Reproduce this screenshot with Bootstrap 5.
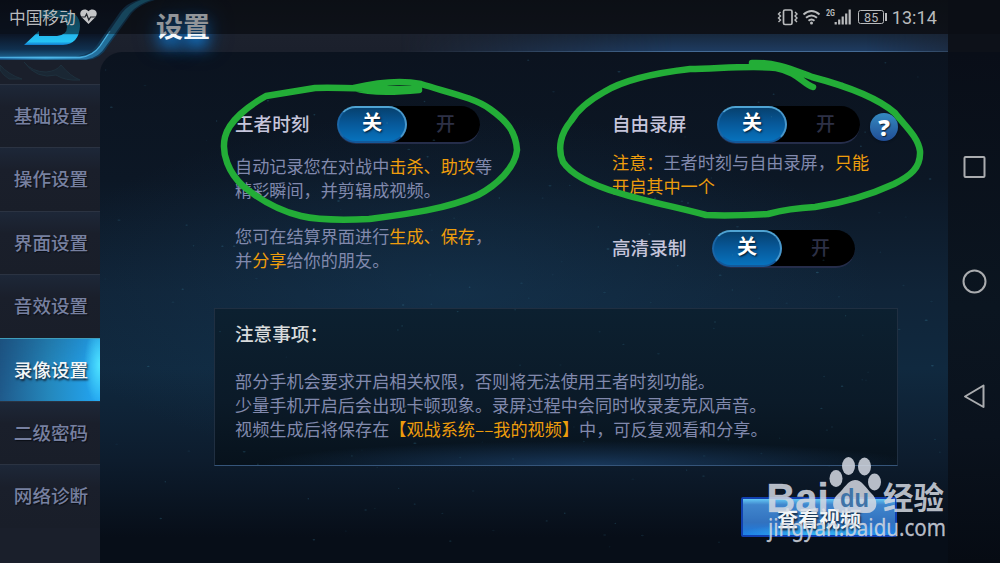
<!DOCTYPE html>
<html lang="zh-CN">
<head>
    <meta charset="UTF-8">
    <meta name="viewport" content="width=device-width, initial-scale=1.0">
    <title>设置</title>
    <link href="https://cdn.jsdelivr.net/npm/bootstrap@5.3.0/dist/css/bootstrap.min.css" rel="stylesheet">
    <style>
        body {
            font-family: "Noto Sans CJK SC", sans-serif;
            background: #080d16;
            color: #8189ad;
        }

        .screen {
            width: 1000px;
            height: 563px;
        }

        /* phone status bar, drawn over the game header */
        .status-bar {
            height: 34px;
            padding: 0 63px 0 9px;
            background: rgba(9, 11, 17, .42);
            color: #b9bbbd;
            font-size: 17px;
            z-index: 3;
        }

        .status-bar .carrier { font-size: 16.7px; line-height: 35px; }
        .status-bar .clock { font-family: Roboto, sans-serif; font-size: 18px; letter-spacing: .1px; line-height: 35px; }

        /* header */
        .game-header {
            height: 52px;
            background: linear-gradient(#0e1219, #12161f 34px, #1c212d 34px, #1b202c);
        }

        .game-header::after {
            content: "";
            position: absolute;
            left: 400px;
            right: 52px;
            top: 34px;
            height: 18px;
            background: linear-gradient(#17283d, #1e3b60);
            border-bottom: 1px solid #446a94;
            -webkit-mask-image: linear-gradient(90deg, transparent, #000 50%, #000 85%, rgba(0, 0, 0, .5));
        }

        .header-end {
            width: 52px;
            height: 52px;
            right: 0;
            top: 0;
            background: #0d1119;
        }

        .title-text {
            padding-left: 156px;
            font-size: 27px;
            font-weight: 700;
            line-height: 52px;
            color: #f4f8fb;
            text-shadow: 0 8px 14px #1480d8, 0 4px 24px #0b4f98;
        }

        .header-art {
            left: 0;
            top: 0;
            z-index: 1;
        }

        /* side menu */
        .side-menu {
            width: 100px;
            padding-top: 32px;
            background: #1a1f2b;
        }

        .side-menu .nav-link {
            height: 63.4px;
            padding: 0;
            text-align: center;
            padding-left: 2px;
            font-size: 18.6px;
            font-weight: 500;
            line-height: 59px;
            color: #7780a0;
            text-shadow: 1px 1px 1px #0a0e16;
            border-radius: 0;
            border-top: 1px solid #2b3342;
            background: linear-gradient(#1d2738, #1a1f2b 35%, #191e29);
        }

        .side-menu .nav-link.active {
            color: #f3f6f8;
            text-shadow: 1px 2px 2px #123;
            border-top-color: #3f9dbb;
            background:
                radial-gradient(ellipse 16px 40px at 100% 42%, #4fe4ff, rgba(40, 190, 255, 0)),
                linear-gradient(160deg, rgba(20, 60, 100, .3), transparent 60%),
                linear-gradient(90deg, #1f5a8b, #2488bd 50%, #22a6f4);
        }

        /* main area */
        .sky-wrap { background: #1a1f2b; }

        .sky {
            width: 848px;
            border-top-left-radius: 22px;
            padding: 54px 50px 0 114px;
            background:
                radial-gradient(ellipse 420px 180px at 42% 47%, rgba(24, 64, 96, .4), transparent),
                linear-gradient(#0b131f 0%, #0c1725 25%, #102438 47%, #10293f 62%, #0d1c2d 80%, #070e18 95%);
        }

        .option-row { padding-left: 21px; }
        .option-left { width: 378px; }
        .option-label {
            font-size: 18.6px;
            font-weight: 500;
            line-height: 34px;
            color: #c6c5dc;
        }

        .option-desc {
            font-size: 17.15px;
            line-height: 23.6px;
            white-space: nowrap;
        }

        .hl { color: #ee9d0c; }

        .switch-pill {
            width: 143px;
            height: 38px;
            border-radius: 19px;
            background: #000;
            border-bottom: 2px solid #252d4a;
            font-size: 20px;
            line-height: 28px;
        }

        .switch-pill .switch-on {
            width: 70px;
            height: 37px;
            border-radius: 19px;
            color: #fff;
            font-weight: 700;
            text-shadow: 1px 1px 2px #012;
            border: 2px solid #1b65a5;
            border-top-color: #4fa3d3;
            border-right-color: #4796cb;
            border-bottom-color: #13599a;
            background: linear-gradient(#06416f, #075797 45%, #0772bd);
        }

        .switch-pill .switch-off {
            color: #2d3046;
            font-weight: 500;
            font-size: 19px;
            line-height: 33px;
            padding-left: 4px;
        }

        .help-dot {
            width: 28px;
            height: 28px;
            margin: 7px 0 0 10px;
            font: 900 23px/28px "Noto Sans", sans-serif;
            color: #fff;
            background: linear-gradient(#3489c0, #204d96);
            box-shadow: 0 1px 2px #07101e;
            text-shadow: 1px 1px 1px #123;
        }

        /* notice panel */
        .notice {
            width: 684px;
            height: 158px;
            padding: 10px 20px;
            border: 1px solid #202f41;
            border-bottom-color: #35557a;
            background:
                radial-gradient(ellipse 330px 24px at 55% 100%, #18375a, transparent),
                linear-gradient(#0c2030, #0b1a28 60%, #07121c);
        }

        .notice-title {
            font-size: 18.6px;
            font-weight: 500;
            line-height: 27px;
            color: #d8dbdc;
            margin-bottom: 23px;
        }

        .video-btn {
            width: 156px;
            height: 40px;
            margin-right: 1px;
            border: 2px solid #1140b0;
            border-radius: 2px;
            padding: 0;
            font-size: 21px;
            font-weight: 700;
            line-height: 32px;
            color: #f2f5f8;
            text-shadow: 1px 2px 2px #123;
            background:
                radial-gradient(ellipse 80px 12px at 50% 100%, #37b8f4, transparent),
                linear-gradient(#63c8f5, #4086cd 16%, #3272bf 65%, #1b7ee6);
        }

        .video-btn:hover { color: #fff; }

        /* phone soft keys */
        .soft-keys {
            width: 52px;
            background: linear-gradient(#090e18, #0b1520 50%, #0a121d 75%, #060b13);
        }

        .overlay-art { left: 0; top: 0; z-index: 5; pointer-events: none; }
    </style>
</head>
<body class="overflow-hidden">

<div class="screen position-relative d-flex flex-column overflow-hidden">

    <!-- Status bar -->
    <div class="status-bar position-absolute top-0 start-0 w-100 d-flex align-items-center">
        <span class="carrier">中国移动</span>
        <svg class="ms-1" width="17" height="16" viewBox="0 0 17 16">
            <path d="M8.5 15 1.7 8.2C-3 2 5-2 8.5 2.3 12-2 20 2 15.3 8.2z" fill="#c4c5c7"/>
            <path d="M1 8h4l1.6-3 2.2 6 1.8-3H16" fill="none" stroke="#20242b" stroke-width="1.2"/>
        </svg>
        <svg class="ms-auto" width="110" height="22" viewBox="778 6 110 22" fill="none" stroke="#b9bbbd">
            <!-- vibrate -->
            <rect x="784.5" y="10" width="8.5" height="14.5" rx="1.5" stroke-width="1.7"/>
            <path d="M781.500 12l-2 2 2 2-2 2 2 2-2 2M796 12l2 2-2 2 2 2-2 2 2 2" stroke-width="1.4"/>
            <!-- wifi -->
            <path d="M804.500 14.500q8-7 16 0M807 17.800q5.500-4.800 11 0M809.500 20.800q3-2.700 6 0" stroke-width="1.9"/>
            <circle cx="812.500" cy="23" r="1.500" fill="#b9bbbd" stroke="none"/>
            <!-- mobile signal -->
            <path d="M836.700 24.500v-2.500M840.200 24.500v-5M843.700 24.500v-8M847.200 24.500v-11M850.700 24.500v-15" stroke-width="2.200"/>
            <text x="827" y="16" font-family="Roboto" font-size="9" font-weight="700" textLength="9" lengthAdjust="spacingAndGlyphs" fill="#b9bbbd" stroke="none">2G</text>
            <!-- battery -->
            <rect x="859.500" y="10.500" width="25" height="13" rx="2" stroke-width="1"/>
            <path d="M887 13v8" stroke-width="2"/>
            <text x="865" y="21.500" font-family="Roboto" font-size="12.500" letter-spacing=".3" fill="#b9bbbd" stroke="none">85</text>
        </svg>
        <span class="clock" style="margin-left: 5px">13:14</span>
    </div>

    <!-- Header -->
    <header class="game-header position-relative flex-shrink-0">
        <svg class="header-art position-absolute" width="170" height="84" viewBox="0 0 170 84">
            <defs>
                <linearGradient id="backPlate" x1="0" y1="0" x2="0" y2="1">
                    <stop offset="0" stop-color="#0a0f1a"/>
                    <stop offset=".6" stop-color="#0c1627"/>
                    <stop offset=".85" stop-color="#10304f"/>
                    <stop offset="1" stop-color="#1c6390"/>
                </linearGradient>
                <linearGradient id="edge" x1="0" y1="0" x2="1" y2="0">
                    <stop offset="0" stop-color="#1c5f9e"/>
                    <stop offset=".3" stop-color="#3aa5dc"/>
                    <stop offset=".6" stop-color="#2779ab"/>
                    <stop offset="1" stop-color="#1d7590"/>
                </linearGradient>
                <linearGradient id="arrow" x1="0" y1="0" x2="0" y2="1">
                    <stop offset="0" stop-color="#12607c"/>
                    <stop offset=".68" stop-color="#168fb9"/>
                    <stop offset=".72" stop-color="#25b9f0"/>
                    <stop offset=".9" stop-color="#25c3f4"/>
                    <stop offset="1" stop-color="#1179cc"/>
                </linearGradient>
            </defs>
            <path d="M0 52H100V84H0z" fill="#1a1f2b"/>
            <path d="M0 0H140Q130 4 123 12L100 44Q95 56 84 58H0z" fill="url(#backPlate)"/>
            <!-- glowing rim of the back plate -->
            <path d="M0 56.500H76Q90 55 97 45L120 12Q127 3 138 0H155Q140 4 132 13L108 46Q101 59 87 60H0z" fill="#123a58"/>
            <path d="M0 56.500H80Q93 55 100 45L122 13Q129 4 141 0H151Q138 4 130 13L106 46Q99 58 86 59.500H0z" fill="url(#edge)" opacity=".85"/>
            <path d="M0 57.500H80Q93 56 100 46L110 31" fill="none" stroke="#55bff0" stroke-width="1.300" opacity=".8"/>
            <!-- back arrow -->
            <path d="M41 10H63Q80 12 80 26 79 44 63 45H24L39 31V36H57Q67 35 67 27 67 19 58 18H38z" fill="url(#arrow)"/>
            <g fill="#1a2734" stroke="#1e303d">
                <path d="M0 65Q9 75 22 79H9Q3 75 0 70z"/>
                <path d="M24 62Q32 72 46 72 57 71 61 65 70 76 80 80 65 81 56 75 37 80 24 62z"/>
            </g>
        </svg>
        <div class="title-text">设置</div>
        <div class="header-end position-absolute"></div>
    </header>

    <div class="sky-wrap d-flex flex-grow-1">
        <!-- Side menu -->
        <nav class="side-menu nav flex-column flex-nowrap">
            <a class="nav-link" href="#">基础设置</a>
            <a class="nav-link" href="#">操作设置</a>
            <a class="nav-link" href="#">界面设置</a>
            <a class="nav-link" href="#">音效设置</a>
            <a class="nav-link active" href="#">录像设置</a>
            <a class="nav-link" href="#">二级密码</a>
            <a class="nav-link" href="#">网络诊断</a>
        </nav>

        <!-- Recording options -->
        <main class="sky d-flex flex-column">
            <div class="option-row d-flex">
                <div class="option-left">
                    <div class="d-flex">
                        <div class="option-label" style="width: 102px">王者时刻</div>
                        <div class="switch-pill d-flex text-center">
                            <div class="switch-on">关</div>
                            <div class="switch-off flex-fill">开</div>
                        </div>
                    </div>
                    <div class="option-desc" style="margin-top: 10px">自动记录您在对战中<span class="hl">击杀、助攻</span>等<br>精彩瞬间，并剪辑成视频。</div>
                    <div class="option-desc" style="margin-top: 23px">您可在结算界面进行<span class="hl">生成、保存</span>，<br>并<span class="hl">分享</span>给你的朋友。</div>
                </div>
                <div>
                    <div class="d-flex">
                        <div class="option-label" style="width: 105px">自由录屏</div>
                        <div class="switch-pill d-flex text-center">
                            <div class="switch-on">关</div>
                            <div class="switch-off flex-fill">开</div>
                        </div>
                        <div class="help-dot rounded-circle text-center">?</div>
                    </div>
                    <div class="option-desc" style="margin-top: 6px"><span class="hl">注意：</span>王者时刻与自由录屏，<span class="hl">只能<br>开启其中一个</span></div>
                    <div class="d-flex" style="margin-top: 33px">
                        <div class="option-label" style="width: 100px">高清录制</div>
                        <div class="switch-pill d-flex text-center">
                            <div class="switch-on">关</div>
                            <div class="switch-off flex-fill">开</div>
                        </div>
                    </div>
                </div>
            </div>

            <section class="notice" style="margin-top: 37px">
                <div class="notice-title">注意事项：</div>
                <div class="option-desc">部分手机会要求开启相关权限，否则将无法使用王者时刻功能。<br>少量手机开启后会出现卡顿现象。录屏过程中会同时收录麦克风声音。<br>视频生成后将保存在<span class="hl">【观战系统––我的视频】</span>中，可反复观看和分享。</div>
            </section>

            <button type="button" class="btn video-btn align-self-end" style="margin-top: 31px">查看视频</button>
        </main>

        <!-- Soft keys -->
        <aside class="soft-keys">
            <svg width="52" height="511" viewBox="948 52 52 511" fill="none" stroke="#aaacaf" stroke-width="2" stroke-linejoin="round">
                <rect x="964.500" y="157" width="20" height="20" rx="1"/>
                <circle cx="974.500" cy="281.500" r="11"/>
                <path d="M983.500 385.500V407L965 396.500z"/>
            </svg>
        </aside>
    </div>

    <!-- Faint stars, hand-drawn rings and the site watermark -->
    <svg class="overlay-art position-absolute" width="1000" height="563" viewBox="0 0 1000 563">
        <g id="stars" fill="#3a7f9c"></g>
        <g fill="none" stroke="#23ad37" stroke-width="6.500" stroke-linecap="round" stroke-linejoin="round">
            <path d="M419 89C385 90 345 87 315 88L266 96C248 106 229 121 225 137C221 154 229 173 243 186C260 200 280 211 301 216C322 221 348 220 369 219C400 215 445 210 478 195C497 185 515 168 517 150C516 132 507 121 490 109C475 98 450 93 421 84C400 80 375 83 354 88C370 93 398 92 419 90"/>
            <path d="M752 63C777 62 793 70 812 77C850 87 879 99 895 113C906 127 918 137 920 151C921 168 910 176 894 184C870 195 842 203 815 207C795 208 783 210 768 214C750 215 728 216 706 215C680 208 645 201 619 193C592 185 571 174 563 162C557 148 561 133 571 121C578 109 588 101 604 92C625 79 655 73 690 69C715 69 750 65 776 68C798 72 803 84 813 87"/>
        </g>
        <g fill="#d4d9e2" fill-opacity=".86">
            <ellipse cx="836" cy="478.500" rx="6.500" ry="8.500"/>
            <ellipse cx="848.500" cy="466" rx="6.500" ry="9"/>
            <ellipse cx="864.500" cy="466.500" rx="6.500" ry="9"/>
            <ellipse cx="874.500" cy="482" rx="6.500" ry="8.500"/>
            <path d="M855 480C862 480 866 488 871 493 880 501 877 513 867 513 860 513 849 512 843 513 832 513 830 501 838 494 844 489 848 480 855 480z"/>
            <text x="766.500" y="511.500" font-family="Liberation Sans" font-weight="700" font-size="41" textLength="62" lengthAdjust="spacingAndGlyphs" stroke="#d4d9e2" stroke-opacity=".6" stroke-width=".6">Bai</text>
            <text x="883" y="508.500" font-family="Noto Sans CJK SC" font-weight="700" font-size="30.500">经验</text>
            <text x="768" y="535.500" font-family="Noto Sans" font-size="23" textLength="178" lengthAdjust="spacingAndGlyphs" stroke="#d4d9e2" stroke-opacity=".6" stroke-width=".4">jingyan.baidu.com</text>
        </g>
        <text x="840" y="507" font-family="Liberation Sans" font-weight="700" font-size="25" textLength="29" lengthAdjust="spacingAndGlyphs" fill="#3f74a8">du</text>
    </svg>
</div>

<script>
    // scatter dim stars over the night sky, always in the same places
    let seed = 11;
    function rand() {
        seed = (seed * 16807) % 2147483647;
        return seed / 2147483647;
    }

    let stars = "";
    for (let i = 0; i < 170; i++) {
        let x = 105 + rand() * 835;
        let y = 60 + rand() * 490;
        stars += `<ellipse cx="${x.toFixed(1)}" cy="${y.toFixed(1)}" rx="${(0.6 + rand()).toFixed(1)}" ry=".7" opacity="${(0.08 + rand() * 0.28).toFixed(2)}"/>`;
    }
    document.getElementById("stars").innerHTML = stars;
</script>
<script src="https://cdn.jsdelivr.net/npm/bootstrap@5.3.0/dist/js/bootstrap.bundle.min.js"></script>
</body>
</html>
